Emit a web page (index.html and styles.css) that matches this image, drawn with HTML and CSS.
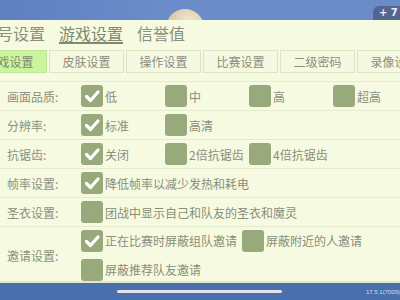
FILE: index.html
```html
<!DOCTYPE html>
<html>
<head>
<meta charset="utf-8">
<link rel="stylesheet" href="styles.css">
</head>
<body>
<div class="screen">
  <div class="sky">
    <div class="orb"></div>
    <div class="badge">+ 7</div>
  </div>
  <div class="panel">
    <div class="maintabs">
      <span class="mtab first">帐号设置</span>
      <span class="mtab active">游戏设置</span>
      <span class="mtab">信誉值</span>
    </div>
    <div class="subtabs">
      <div class="stab first active">游戏设置</div>
      <div class="stab">皮肤设置</div>
      <div class="stab">操作设置</div>
      <div class="stab">比赛设置</div>
      <div class="stab">二级密码</div>
      <div class="stab">录像设置</div>
    </div>
    <div class="rows">
      <div class="row">
        <div class="label">画面品质:</div>
        <div class="opts">
          <div class="opt"><span class="cb on"><svg viewBox="0 0 22 22"><path d="M5.5 11.5 L9.5 15.5 L17 7"/></svg></span>低</div>
          <div class="opt"><span class="cb"></span>中</div>
          <div class="opt"><span class="cb"></span>高</div>
          <div class="opt"><span class="cb"></span>超高</div>
        </div>
      </div>
      <div class="row">
        <div class="label">分辨率:</div>
        <div class="opts">
          <div class="opt"><span class="cb on"><svg viewBox="0 0 22 22"><path d="M5.5 11.5 L9.5 15.5 L17 7"/></svg></span>标准</div>
          <div class="opt"><span class="cb"></span>高清</div>
        </div>
      </div>
      <div class="row">
        <div class="label">抗锯齿:</div>
        <div class="opts">
          <div class="opt"><span class="cb on"><svg viewBox="0 0 22 22"><path d="M5.5 11.5 L9.5 15.5 L17 7"/></svg></span>关闭</div>
          <div class="opt"><span class="cb"></span>2倍抗锯齿</div>
          <div class="opt"><span class="cb"></span>4倍抗锯齿</div>
        </div>
      </div>
      <div class="row">
        <div class="label">帧率设置:</div>
        <div class="flow">
          <div class="opt"><span class="cb on"><svg viewBox="0 0 22 22"><path d="M5.5 11.5 L9.5 15.5 L17 7"/></svg></span>降低帧率以减少发热和耗电</div>
        </div>
      </div>
      <div class="row">
        <div class="label">圣衣设置:</div>
        <div class="flow">
          <div class="opt"><span class="cb"></span>团战中显示自己和队友的圣衣和魔灵</div>
        </div>
      </div>
      <div class="row tall">
        <div class="label">邀请设置:</div>
        <div class="lines">
          <div class="flow">
            <div class="opt"><span class="cb on"><svg viewBox="0 0 22 22"><path d="M5.5 11.5 L9.5 15.5 L17 7"/></svg></span>正在比赛时屏蔽组队邀请</div>
            <div class="opt"><span class="cb"></span>屏蔽附近的人邀请</div>
          </div>
          <div class="flow">
            <div class="opt"><span class="cb"></span>屏蔽推荐队友邀请</div>
          </div>
        </div>
      </div>
    </div>
  </div>
  <div class="footer">
    <div class="progress"></div>
    <span class="ver">17.5.1(7009)</span>
  </div>
</div>
</body>
</html>
```

FILE: styles.css
```css
* { box-sizing: border-box; }
html, body { margin: 0; padding: 0; }
body {
  width: 400px;
  height: 300px;
  overflow: hidden;
  font-family: "Noto Sans CJK SC", "Noto Sans", sans-serif;
  background: #4a6fae;
}
.screen {
  width: 400px;
  height: 300px;
  display: flex;
  flex-direction: column;
  overflow: hidden;
}
.sky {
  position: relative;
  height: 20px;
  flex: none;
  background: linear-gradient(90deg, #5f7fc0 0%, #6b8bc9 40%, #6c8cc8 100%);
  overflow: hidden;
}
.orb {
  position: absolute;
  left: 166px;
  top: 9px;
  width: 38px;
  height: 38px;
  border-radius: 50%;
  background: radial-gradient(circle at 60% 35%, #f3ead2 0%, #d9ccaa 55%, #b7a888 100%);
}
.badge {
  position: absolute;
  right: -6px;
  top: 6px;
  width: 33px;
  height: 20px;
  border-radius: 6px;
  background: #54668f;
  color: #e8ecf4;
  font-family: "DejaVu Sans", sans-serif;
  font-weight: bold;
  font-size: 10px;
  line-height: 14px;
  padding-left: 6px;
}
.panel {
  height: 263px;
  flex: none;
  background: #f6fae1;
  border-bottom: 2px solid #e3e8cc;
  overflow: hidden;
}
.maintabs {
  display: flex;
  gap: 14px;
  padding-top: 5px;
  height: 30px;
  white-space: nowrap;
}
.mtab {
  font-size: 16px;
  line-height: 17px;
  height: 19px;
  color: #8a8e7c;
  flex: none;
}
.mtab.first { margin-left: -19px; }
.mtab.active {
  color: #7f8870;
  border-bottom: 2px solid #7f8a6c;
}
.subtabs {
  display: flex;
  gap: 2px;
  height: 23px;
  white-space: nowrap;
}
.stab {
  flex: none;
  width: 75px;
  height: 23px;
  border: 1px solid #dde4c3;
  background: #f6f9e2;
  font-size: 12px;
  line-height: 21px;
  text-align: center;
  color: #8a8e7c;
}
.stab.first { margin-left: -28px; }
.stab.active {
  background: #cbf59c;
  border-color: #c3e59a;
  color: #7f8a6e;
}
.rows {
  margin-top: 8px;
}
.row {
  display: flex;
  align-items: center;
  height: 29px;
  border-top: 1px solid #e6ebcf;
}
.row.tall {
  height: 57px;
}
.label {
  flex: none;
  width: 81px;
  padding-left: 7px;
  font-size: 12px;
  color: #8c907e;
  white-space: nowrap;
}
.opts {
  display: grid;
  grid-template-columns: repeat(4, 84px);
}
.opt {
  display: flex;
  align-items: center;
  gap: 2px;
  font-size: 12px;
  color: #8a8e7a;
  white-space: nowrap;
}
.flow {
  display: flex;
  align-items: center;
  gap: 5px;
  height: 28px;
}
.lines {
  display: flex;
  flex-direction: column;
  gap: 1px;
}
.cb {
  flex: none;
  width: 22px;
  height: 22px;
  border-radius: 3px;
  background: #98a97c;
  display: flex;
}
.cb svg {
  width: 22px;
  height: 22px;
}
.cb svg path {
  fill: none;
  stroke: #ffffff;
  stroke-width: 3.2;
  stroke-linecap: round;
  stroke-linejoin: round;
}
.footer {
  flex: 1;
  display: flex;
  align-items: center;
  background: #4a6fae;
  padding-left: 117px;
}
.progress {
  width: 166px;
  height: 3px;
  border-radius: 2px;
  background: #e3e4ea;
}
.ver {
  margin-left: 84px;
  font-family: "Liberation Sans", sans-serif;
  font-size: 6px;
  color: #d6dcea;
  white-space: nowrap;
}
```
